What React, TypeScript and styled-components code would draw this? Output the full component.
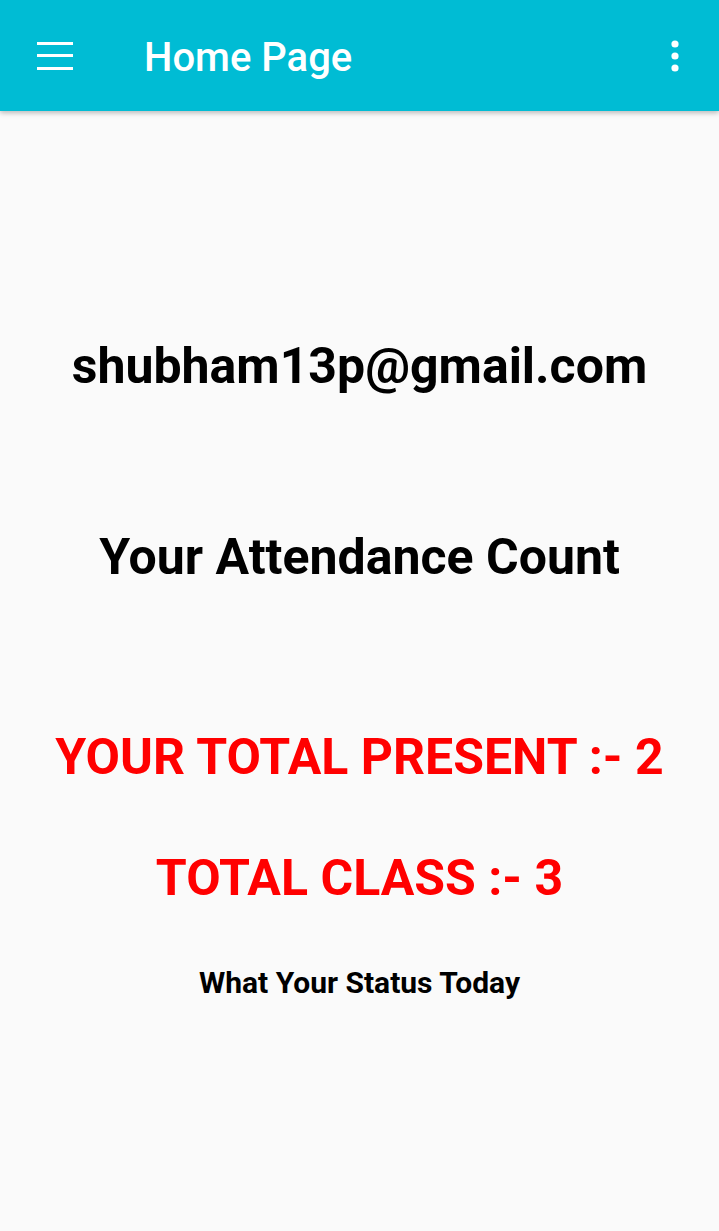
import styled, { createGlobalStyle } from "styled-components"

const Global = createGlobalStyle`
  html, body {
    margin: 0;
    padding: 0;
    background: #fafafa;
    font-family: Roboto, "Noto Sans", sans-serif;
  }
`

const App: React.FC = () => {
  return (
    <Screen>
      <Global />
      <AppBar>
        <IconButton aria-label="menu">
          <svg width="36" height="28" viewBox="0 0 36 28">
            <rect x="0" y="0" width="36" height="3" fill="#fff" />
            <rect x="0" y="12" width="36" height="3" fill="#fff" />
            <rect x="0" y="25" width="36" height="3" fill="#fff" />
          </svg>
        </IconButton>
        <Title>Home Page</Title>
        <Overflow aria-label="more">
          <svg width="8" height="32" viewBox="0 0 8 32">
            <circle cx="4" cy="4" r="3.6" fill="#fff" />
            <circle cx="4" cy="16" r="3.6" fill="#fff" />
            <circle cx="4" cy="28" r="3.6" fill="#fff" />
          </svg>
        </Overflow>
      </AppBar>

      <Content>
        <Line $size={50} $gap={0}>shubham13p@gmail.com</Line>
        <Line $size={50} $gap={132}>Your Attendance Count</Line>
        <Line $size={50} $gap={141} $red>YOUR TOTAL PRESENT :- 2</Line>
        <Line $size={50} $gap={62} $red>TOTAL CLASS :- 3</Line>
        <Line $size={30} $gap={57}>What Your Status Today</Line>
      </Content>
    </Screen>
  )
}

export default App

const Screen = styled.div`
  min-height: 1231px;
  background: #fafafa;
`
const AppBar = styled.header`
  height: 111px;
  background: #00bcd4;
  display: flex;
  align-items: center;
  padding: 0 40px 0 37px;
  box-sizing: border-box;
  box-shadow: 0 2px 5px rgba(0, 0, 0, 0.26);
  position: relative;
  z-index: 1;
`
const IconButton = styled.div`
  width: 36px;
  height: 28px;
  display: flex;
`
const Title = styled.h1`
  margin: 3px 0 0 71px;
  flex: 1;
  color: #fff;
  font-size: 40px;
  font-weight: 500;
`
const Overflow = styled.div`
  width: 8px;
  height: 32px;
  display: flex;
`
const Content = styled.main`
  display: flex;
  flex-direction: column;
  align-items: center;
  padding-top: 226px;
`
const Line = styled.div<{ $size: number; $gap: number; $red?: boolean }>`
  margin-top: ${p => p.$gap}px;
  font-size: ${p => p.$size}px;
  line-height: ${p => Math.round(p.$size * 1.17)}px;
  font-weight: 700;
  color: ${p => (p.$red ? "#ff0000" : "#000")};
  text-align: center;
  white-space: nowrap;
`
